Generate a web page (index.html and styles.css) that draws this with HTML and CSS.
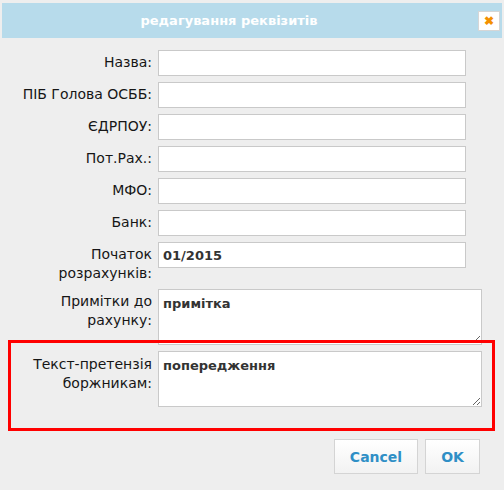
FILE: index.html
```html
<!DOCTYPE html>
<html lang="uk">
<head>
    <meta charset="UTF-8">
    <title>редагування реквізитів</title>
    <link rel="stylesheet" href="styles.css">
</head>
<body>
    <div class="dialog">
        <div class="dialog-title">
            <span class="title-text">редагування реквізитів</span>
            <button class="close-btn" title="close">&#10006;</button>
        </div>

        <form class="form">
            <label class="field-label">Назва:</label>
            <input class="field-input" type="text">

            <label class="field-label">ПІБ Голова ОСББ:</label>
            <input class="field-input" type="text">

            <label class="field-label">ЄДРПОУ:</label>
            <input class="field-input" type="text">

            <label class="field-label">Пот.Рах.:</label>
            <input class="field-input" type="text">

            <label class="field-label">МФО:</label>
            <input class="field-input" type="text">

            <label class="field-label">Банк:</label>
            <input class="field-input" type="text">

            <label class="field-label">Початок<br>розрахунків:</label>
            <input class="field-input" type="text" value="01/2015">

            <label class="field-label">Примітки до<br>рахунку:</label>
            <textarea class="field-area">примітка</textarea>

            <label class="field-label">Текст-претензія<br>боржникам:</label>
            <textarea class="field-area">попередження</textarea>
        </form>

        <!-- highlight around the claim text row -->
        <div class="highlight"></div>

        <div class="buttons">
            <button class="btn btn-cancel" type="button">Cancel</button>
            <button class="btn btn-ok" type="button">OK</button>
        </div>
    </div>
</body>
</html>
```

FILE: styles.css
```css
body {
    margin: 0;
    background-color: #eeeeee;
    font-family: "DejaVu Sans", Verdana, sans-serif;
}
.dialog {
    position: relative;
    width: 504px;
    height: 490px;
    padding-top: 3px;
    box-sizing: border-box;
}
.dialog-title {
    display: flex;
    align-items: center;
    height: 35px;
    margin: 0 2px;
    background-color: #b7dbeb;
}
.title-text {
    flex: 1;
    text-align: center;
    color: #ffffff;
    font-weight: bold;
    font-size: 13px;
    margin-right: 22px;
}
.close-btn {
    width: 22px;
    height: 20px;
    margin-right: 2px;
    padding: 0;
    background-color: #ffffff;
    border: 1px solid #d6d6d6;
    color: #f39000;
    font-size: 12px;
    line-height: 18px;
    font-weight: bold;
    cursor: pointer;
}
.form {
    display: grid;
    grid-template-columns: 152px auto;
    column-gap: 6px;
    row-gap: 6px;
    align-items: start;
    justify-items: start;
    margin-top: 12px;
}
.field-label {
    justify-self: end;
    text-align: right;
    font-size: 14px;
    line-height: 19px;
    padding-top: 3px;
    color: #161616;
}
.field-input,
.field-area {
    box-sizing: border-box;
    margin: 0;
    border: 1px solid #c9c9c9;
    background-color: #ffffff;
    font-family: "DejaVu Sans", Verdana, sans-serif;
    font-weight: bold;
    font-size: 13px;
    color: #333333;
}
.field-input {
    width: 308px;
    height: 26px;
    padding: 0 4px;
}
.field-area {
    width: 324px;
    height: 56px;
    padding: 6px 4px;
    resize: vertical;
}
.field-area + .field-label {
    margin-top: 1px;
}
.highlight {
    position: absolute;
    left: 8px;
    top: 340px;
    width: 487px;
    height: 91px;
    box-sizing: border-box;
    border: 3px solid #ff0000;
    pointer-events: none;
}
.buttons {
    display: flex;
    justify-content: flex-end;
    gap: 7px;
    margin-top: 32px;
    padding-right: 24px;
}
.btn {
    height: 35px;
    padding: 0;
    background: linear-gradient(#ffffff, #f2f2f2);
    border: 1px solid #d4d4d4;
    color: #2f8fc6;
    font-family: "DejaVu Sans", Verdana, sans-serif;
    font-weight: bold;
    font-size: 14px;
    cursor: pointer;
}
.btn-cancel {
    width: 84px;
}
.btn-ok {
    width: 55px;
}
```
